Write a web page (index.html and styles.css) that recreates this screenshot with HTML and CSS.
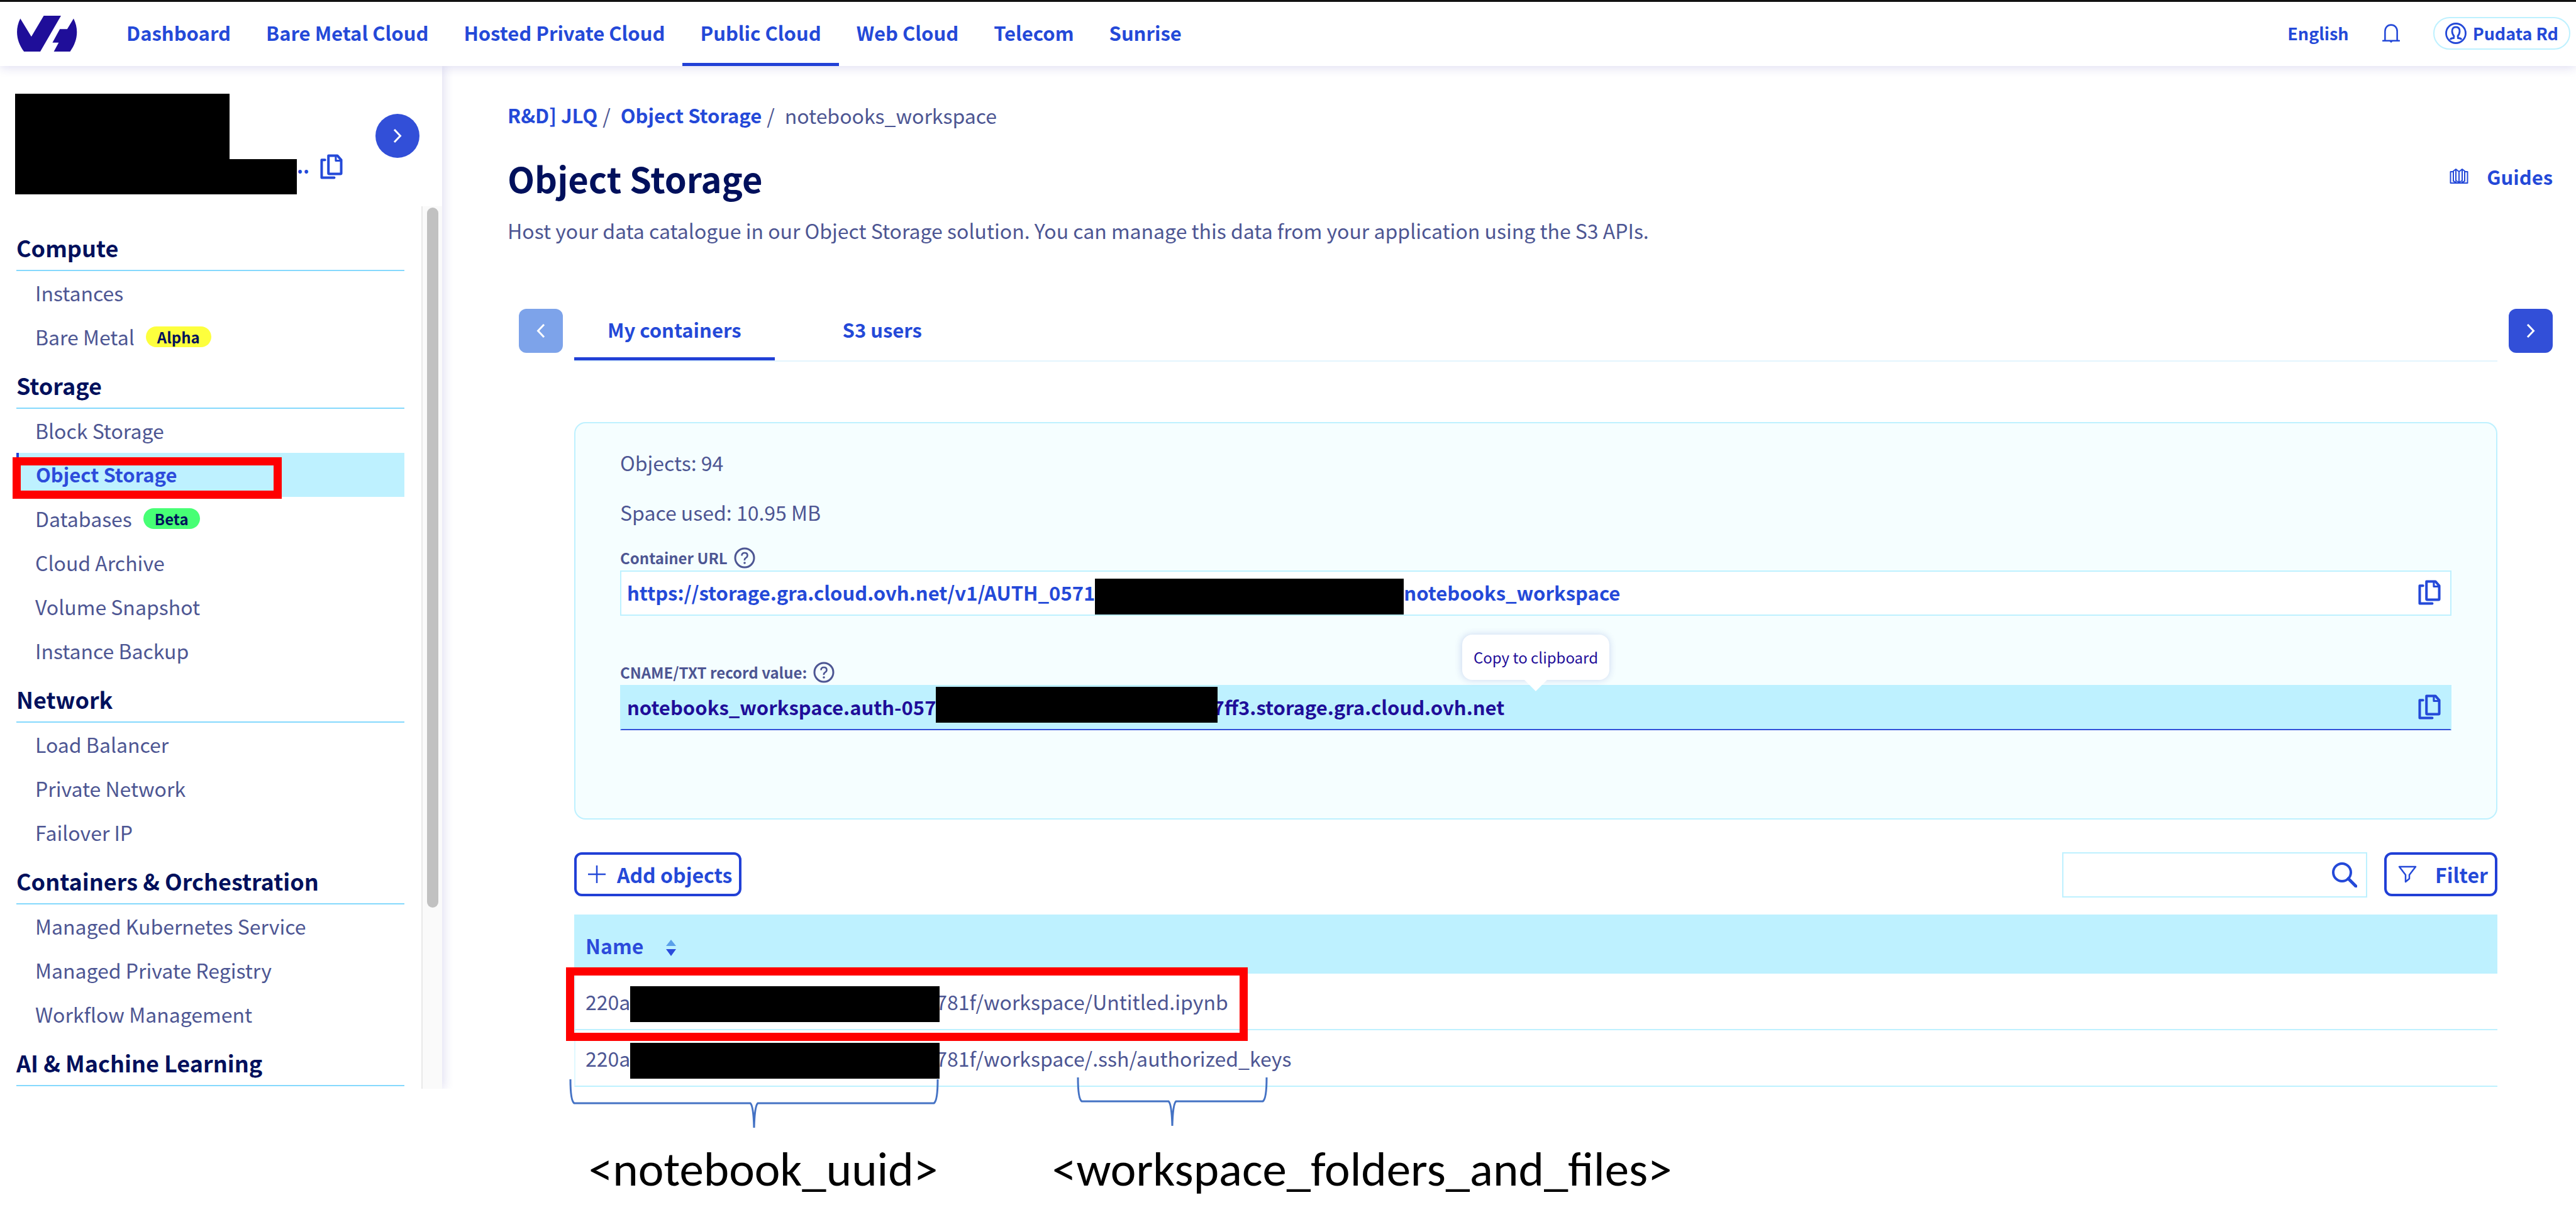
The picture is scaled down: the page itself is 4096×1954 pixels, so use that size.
FILE: index.html
```
<!DOCTYPE html>
<html lang="en">
<head>
<meta charset="utf-8">
<title>Object Storage</title>
<link rel="stylesheet" href="styles.css">
</head>
<body>
<svg class="symbols" aria-hidden="true">
  <symbol id="copy" viewBox="0 0 115 130">
    <g fill="none" stroke="currentColor" stroke-width="13" stroke-linecap="round" stroke-linejoin="round">
      <path d="M24 30H7V122H72"/>
      <path d="M42 8H88L108 30V98Q108 102 104 102H46Q42 102 42 98Z"/>
      <path d="M80 10V34H106" stroke-width="10"/>
    </g>
  </symbol>
  <symbol id="help" viewBox="0 0 34 34">
    <circle cx="17" cy="17" r="15" fill="none" stroke="currentColor" stroke-width="3"/>
    <path d="M12.500 13.500Q12.500 9 17 9T21.500 13Q21.500 15.500 19 17T17 21" fill="none" stroke="currentColor" stroke-width="2.600"/>
    <circle cx="17" cy="25" r="1.800" fill="currentColor"/>
  </symbol>
  <symbol id="chevron" viewBox="0 0 14 24">
    <path d="M2 2L11.500 12L2 22" fill="none" stroke="currentColor" stroke-width="3"/>
  </symbol>
</svg>

<div class="shell">
  <header class="topbar">
    <a class="logo" href="#" aria-label="OVHcloud">
      <svg viewBox="55 50 310 185"><path fill="#1f0e99" d="M73 65L130 158L194 50H283L176 235H92C55 185 43 125 73 65ZM348 65C378 125 366 185 330 235H246L271 189H239L277 119H315Z"/></svg>
    </a>
    <nav class="topnav">
      <a href="#">Dashboard</a>
      <a href="#">Bare Metal Cloud</a>
      <a href="#">Hosted Private Cloud</a>
      <a href="#" class="current">Public Cloud</a>
      <a href="#">Web Cloud</a>
      <a href="#">Telecom</a>
      <a href="#">Sunrise</a>
    </nav>
    <div class="account">
      <button class="plain language">English</button>
      <button class="plain" aria-label="Notifications">
        <svg class="bell" viewBox="0 0 26 28"><path d="M1 25H25M4 24V11C4 5 8 1.500 13 1.500S22 5 22 11V24" fill="none" stroke="currentColor" stroke-width="2.400" stroke-linecap="round"/><path d="M9.500 25H16.500L13 28Z" fill="currentColor"/></svg>
      </button>
      <button class="user">
        <svg viewBox="0 0 34 34" fill="none" stroke="currentColor" stroke-width="2.800"><circle cx="17" cy="17" r="15.500"/><path d="M8 27Q9 24.500 13.500 24.500L14 21.500Q11 18 11 13.500Q11 7 17 7T23 13.500Q23 18 20 21.500L20.500 24.500Q25 24.500 26 27"/></svg>
        <span>Pudata Rd</span>
      </button>
    </div>
  </header>

  <div class="workarea">
    <aside class="sidebar">
      <div class="project">
        <div class="project-id">
          <div class="redacted redacted-name"></div>
          <div class="project-line">
            <div class="redacted redacted-id"></div>
            <button class="plain project-copy" aria-label="Copy project ID"><span>..</span><svg class="copy-icon"><use href="#copy"/></svg></button>
          </div>
        </div>
        <button class="expand" aria-label="Expand"><svg class="chevron"><use href="#chevron"/></svg></button>
      </div>
      <div class="menu-area">
        <nav class="menu">
          <h2>Compute</h2>
          <ul>
            <li><a href="#">Instances</a></li>
            <li><a href="#">Bare Metal <span class="badge alpha">Alpha</span></a></li>
          </ul>
          <h2>Storage</h2>
          <ul>
            <li><a href="#">Block Storage</a></li>
            <li class="active"><a href="#">Object Storage</a><span class="highlight highlight-menu"></span></li>
            <li><a href="#">Databases <span class="badge beta">Beta</span></a></li>
            <li><a href="#">Cloud Archive</a></li>
            <li><a href="#">Volume Snapshot</a></li>
            <li><a href="#">Instance Backup</a></li>
          </ul>
          <h2>Network</h2>
          <ul>
            <li><a href="#">Load Balancer</a></li>
            <li><a href="#">Private Network</a></li>
            <li><a href="#">Failover IP</a></li>
          </ul>
          <h2>Containers &amp; Orchestration</h2>
          <ul>
            <li><a href="#">Managed Kubernetes Service</a></li>
            <li><a href="#">Managed Private Registry</a></li>
            <li><a href="#">Workflow Management</a></li>
          </ul>
          <h2>AI &amp; Machine Learning</h2>
        </nav>
        <div class="scrollbar"><div class="thumb"></div></div>
      </div>
    </aside>

    <main class="content">
      <nav class="breadcrumb" aria-label="Breadcrumb">
        <a href="#">R&amp;D] JLQ</a><span class="slash">/</span>
        <a href="#">Object Storage</a><span class="slash">/</span>
        <span>notebooks_workspace</span>
      </nav>
      <div class="title-row">
        <h1>Object Storage</h1>
        <button class="plain guides">
          <svg viewBox="0 0 30 25" fill="none" stroke="currentColor" stroke-width="2" stroke-linejoin="round"><path d="M6 5H1.500V23H28.500V5H24M15 5V22M15 5L10 1L6 4V20L11 22M15 5L20 1L24 4V20L19 22"/><path d="M10 3V19L15 22L20 19V3"/></svg>
          <span>Guides</span>
        </button>
      </div>
      <p class="lead">Host your data catalogue in our Object Storage solution. You can manage this data from your application using the S3 APIs.</p>

      <div class="tab-row">
        <button class="step" disabled aria-label="Previous"><svg class="chevron flip"><use href="#chevron"/></svg></button>
        <div class="tabs">
          <a href="#" class="current">My containers</a>
          <a href="#">S3 users</a>
        </div>
        <button class="step" aria-label="Next"><svg class="chevron"><use href="#chevron"/></svg></button>
      </div>

      <section class="container-view">
        <div class="panel">
          <p>Objects: 94</p>
          <p>Space used: 10.95 MB</p>
          <div class="field">
            <div class="label">Container URL <svg class="help"><use href="#help"/></svg></div>
            <div class="copybox">
              <a href="#">https://storage.gra.cloud.ovh.net/v1/AUTH_0571<span class="redacted redacted-url"></span>notebooks_workspace</a>
              <button class="plain" aria-label="Copy URL"><svg class="copy-icon"><use href="#copy"/></svg></button>
            </div>
          </div>
          <div class="field">
            <div class="label">CNAME/TXT record value: <svg class="help"><use href="#help"/></svg></div>
            <div class="copybox hover">
              <a href="#">notebooks_workspace.auth-057<span class="redacted redacted-cname"></span>7ff3.storage.gra.cloud.ovh.net</a>
              <button class="plain" aria-label="Copy record value"><svg class="copy-icon"><use href="#copy"/></svg></button>
              <div class="tooltip" role="tooltip">Copy to clipboard</div>
            </div>
          </div>
        </div>

        <div class="toolbar">
          <button class="outlined add"><svg class="plus" viewBox="0 0 28 28"><path d="M14 0V28M0 14H28" stroke="currentColor" stroke-width="2.500"/></svg>Add objects</button>
          <div class="tools">
            <div class="search">
              <input type="search" aria-label="Search">
              <svg viewBox="0 0 40 40" fill="none" stroke="currentColor" stroke-width="4"><circle cx="16" cy="16" r="14"/><path d="M26 26L38 38" stroke-width="5" stroke-linecap="round"/></svg>
            </div>
            <button class="outlined filter"><svg class="funnel" viewBox="0 0 30 29"><path d="M2 2H28L18 15V21L12 26V15Z" fill="none" stroke="currentColor" stroke-width="2.500" stroke-linejoin="round"/></svg>Filter</button>
          </div>
        </div>

        <div class="table-wrap">
          <table>
            <thead>
              <tr><th>Name<svg class="sort" viewBox="0 0 16 26"><path d="M0 10L8 0L16 10Z" fill="#5aa0ea"/><path d="M0 15H16L8 26Z" fill="#2a4bdc"/></svg></th></tr>
            </thead>
            <tbody>
              <tr><td>220a<span class="redacted redacted-uuid"></span>781f/workspace/Untitled.ipynb</td></tr>
              <tr><td>220a<span class="redacted redacted-uuid"></span>781f/workspace/.ssh/authorized_keys</td></tr>
            </tbody>
          </table>
          <span class="highlight highlight-row"></span>
        </div>
      </section>
    </main>
  </div>
</div>

<div class="notes">
  <div class="note note-uuid">
    <svg class="brace" viewBox="0 0 586 77" preserveAspectRatio="none"><path d="M1 0Q1 34 7 38H287Q292 42 293 77Q294 42 299 38H579Q585 34 585 0"/></svg>
    <span>&lt;notebook_uuid&gt;</span>
  </div>
  <div class="note note-files">
    <svg class="brace" viewBox="0 0 302 77" preserveAspectRatio="none"><path d="M1 0Q1 34 7 38H145Q150 42 151 77Q152 42 157 38H295Q301 34 301 0"/></svg>
    <span>&lt;workspace_folders_and_files&gt;</span>
  </div>
</div>
</body>
</html>
```
FILE: styles.css
```
* { box-sizing: border-box; }

body {
  margin: 0;
  background: #fff;
  color: #4d5693;
  font-family: "Noto Sans CJK SC", "Noto Sans", sans-serif;
  font-size: 32px;
  line-height: 48px;
}

h1, h2, p, ul { margin: 0; padding: 0; }
ul { list-style: none; }
a { color: inherit; text-decoration: none; }
svg { display: block; flex: none; }
button { font: inherit; color: inherit; cursor: pointer; }

.symbols { position: absolute; width: 0; height: 0; }

.plain {
  padding: 0;
  border: 0;
  background: none;
  color: #2449d8;
}

.redacted { background: #000; }

.highlight {
  position: absolute;
  border: 13px solid #f00;
  pointer-events: none;
}

.copy-icon { width: 36px; height: 40px; }
.chevron { width: 14px; height: 24px; }
.flip { transform: rotate(180deg); }

.shell { overflow: hidden; }

/* Top bar */

.topbar {
  position: relative;
  z-index: 2;
  display: flex;
  align-items: flex-start;
  border-top: 3px solid #111;
  background: #fff;
  color: #2449d8;
  font-size: 31px;
  font-weight: 700;
  box-shadow: 0 2px 16px rgba(40, 30, 160, 0.16);
}

.logo { padding: 22px 50px 0 26px; }
.logo svg { width: 97px; height: 57px; }

.topnav { display: flex; }
.topnav a {
  padding: 25px 28px 24px;
  border-bottom: 5px solid transparent;
}
.topnav .current { border-color: #2140d6; }

.account {
  display: flex;
  align-items: center;
  gap: 53px;
  margin-left: auto;
  padding: 24px 9px 0 0;
  font-size: 27px;
}
.account .plain { font-weight: 700; }
.bell { width: 28px; height: 30px; }
.user {
  display: flex;
  align-items: center;
  gap: 10px;
  height: 52px;
  padding: 0 17px;
  border: 2px solid #bef1ff;
  border-radius: 26px;
  background: #fff;
  font-weight: 700;
}
.user svg { width: 34px; height: 34px; }

/* Sidebar */

.workarea { display: flex; }

.sidebar {
  display: flex;
  flex-direction: column;
  flex: none;
  width: 703px;
  box-shadow: 2px 0 16px rgba(40, 30, 160, 0.16);
}

.project {
  display: flex;
  align-items: flex-start;
  justify-content: space-between;
  padding: 44px 36px 19px 24px;
}
.redacted-name { width: 341px; height: 104px; }
.redacted-id { width: 448px; height: 56px; }
.project-line { display: flex; align-items: flex-start; }
.project-copy {
  display: flex;
  gap: 17px;
  height: 40px;
  margin-top: -8px;
  font-size: 31px;
  font-weight: 700;
  line-height: 36px;
}

.expand {
  display: grid;
  place-items: center;
  width: 70px;
  height: 70px;
  margin-top: 32px;
  padding: 0;
  border: 0;
  border-radius: 50%;
  background: #324fd8;
  color: #fff;
}

.menu-area {
  display: flex;
  justify-content: space-between;
  flex: 1;
}
.menu { width: 643px; padding: 24px 0 4px 26px; }
.menu h2 {
  padding: 17px 0 12px;
  border-bottom: 2px solid #85d9fd;
  color: #00105c;
  font-size: 36px;
  font-weight: 700;
  line-height: 48px;
}
.menu li { position: relative; }
.menu li a {
  display: flex;
  align-items: center;
  gap: 18px;
  height: 70px;
  padding: 0 0 2px 30px;
}
.menu .active { background: #bef1ff; color: #2c4bdb; font-size: 31px; font-weight: 700; }
.menu .active a { padding-left: 27px; border-left: 4px solid #2140d6; }
.highlight-menu { left: -6px; top: 7px; width: 428px; height: 66px; }

.badge {
  padding: 0 18px;
  border-radius: 17px;
  color: #00105c;
  font-size: 24px;
  font-weight: 700;
  line-height: 33px;
}
.alpha { background: #fdff3d; }
.beta { background: #47ff75; }

.scrollbar {
  width: 33px;
  padding: 2px 7px;
  border-left: 2px solid #e8e8e8;
  background: #fafafa;
}
.thumb { width: 18px; height: 1113px; border-radius: 9px; background: #c1c1c1; }

/* Content */

.content { flex: 1; padding: 54px 37px 0 104px; }

.breadcrumb { display: flex; }
.breadcrumb a { color: #2449d8; font-size: 31px; font-weight: 700; }
.slash { margin: 0 16px 0 8px; }

.title-row {
  display: flex;
  align-items: center;
  justify-content: space-between;
  margin-top: 36px;
}
h1 { color: #00105c; font-size: 56px; font-weight: 700; line-height: 80px; }
.guides {
  display: flex;
  align-items: center;
  gap: 29px;
  padding-bottom: 5px;
  font-size: 31px;
  font-weight: 700;
}
.guides svg { width: 30px; height: 25px; }

.lead { margin-top: 19px; }

.tab-row {
  display: flex;
  align-items: flex-start;
  gap: 18px;
  margin-top: 101px;
  padding-left: 18px;
}
.step {
  display: grid;
  place-items: center;
  flex: none;
  width: 70px;
  height: 70px;
  padding: 0;
  border: 0;
  border-radius: 12px;
  background: #324fd8;
  color: #fff;
}
.step:disabled { background: #7da3ea; }

.tabs {
  display: flex;
  flex: 1;
  gap: 55px;
  border-bottom: 2px solid #e3f5fd;
  color: #2449d8;
  font-size: 31px;
  font-weight: 700;
}
.tabs a { padding: 9px 53px 20px; border-bottom: 5px solid transparent; }
.tabs .current { border-color: #2140d6; }

.container-view { margin: 96px 88px 0 106px; }

.panel {
  padding: 38px 71px 140px;
  border: 2px solid #bef1ff;
  border-radius: 18px;
  background: #f5feff;
}
.panel p + p { margin-top: 31px; }
.field { margin-top: 32px; }
.field + .field { margin-top: 73px; }
.label {
  display: flex;
  align-items: center;
  gap: 10px;
  height: 34px;
  font-size: 24px;
  font-weight: 700;
}
.help { width: 34px; height: 34px; }

.copybox {
  position: relative;
  display: flex;
  align-items: center;
  justify-content: space-between;
  height: 72px;
  margin-top: 3px;
  padding: 0 15px 2px 9px;
  border: 2px solid #bef1ff;
  background: #fff;
  color: #2449d8;
  font-size: 31px;
  font-weight: 700;
}
.copybox a { display: flex; align-items: center; }
.copybox.hover {
  border-bottom-color: #324fd8;
  background: #bef1ff;
  color: #1f0e99;
}
.redacted-url { width: 491px; height: 57px; margin-top: 12px; }
.redacted-cname {
  z-index: 1;
  width: 448px;
  height: 57px;
  margin: 0 -8px 8px 0;
}

.tooltip {
  position: absolute;
  left: 50%;
  bottom: 78px;
  padding: 12px 18px;
  border-radius: 16px;
  transform: translateX(-50%);
  background: #fff;
  color: #1f0e99;
  font-size: 24px;
  font-weight: 400;
  box-shadow: 0 0 12px rgba(40, 60, 180, 0.2);
}
.tooltip::after {
  content: "";
  position: absolute;
  left: 50%;
  top: 100%;
  margin-left: -18px;
  border: 18px solid transparent;
  border-top-color: #fff;
  border-bottom: 0;
}

.toolbar {
  display: flex;
  align-items: flex-start;
  justify-content: space-between;
  margin-top: 52px;
}
.outlined {
  display: flex;
  align-items: center;
  height: 70px;
  padding: 0 11px 0 18px;
  border: 4px solid #2140d6;
  border-radius: 12px;
  background: #fff;
  color: #2449d8;
  font-weight: 700;
}
.add { gap: 18px; }
.plus { width: 28px; height: 28px; }
.filter { gap: 29px; }
.funnel { width: 30px; height: 29px; }

.tools { display: flex; gap: 27px; }
.search {
  display: flex;
  align-items: center;
  width: 485px;
  height: 72px;
  padding-right: 14px;
  border: 2px solid #bef1ff;
  background: #fff;
  color: #2449d8;
}
.search input {
  flex: 1;
  min-width: 0;
  height: 100%;
  padding: 0 16px;
  border: 0;
  outline: 0;
  background: none;
  font: inherit;
}
.search svg { width: 40px; height: 40px; }

.table-wrap { position: relative; margin-top: 27px; }
table { width: 100%; border-collapse: separate; border-spacing: 0; }
th {
  padding: 25px 18px 21px;
  background: #bef1ff;
  color: #2c4bdb;
  font-weight: 700;
  text-align: left;
}
.sort { display: inline-block; width: 16px; height: 26px; margin-left: 36px; vertical-align: -3px; }
td {
  height: 90px;
  padding: 9px 16px 0;
  border-bottom: 2px solid #bef1ff;
  border-left: 2px solid #dff8ff;
}
.redacted-uuid {
  position: relative;
  z-index: 1;
  display: inline-block;
  width: 492px;
  height: 57px;
  margin-right: -6px;
  vertical-align: middle;
}
.highlight-row { left: -13px; top: 84px; width: 1084px; height: 117px; }

/* Callouts under the listing */

.notes {
  display: flex;
  gap: 182px;
  padding: 80px 0 0 936px;
  color: #000;
  font-family: Carlito, Calibri, Lato, sans-serif;
  font-size: 77px;
  line-height: 96px;
}
.note { position: relative; }
.brace {
  position: absolute;
  height: 77px;
  overflow: visible;
  fill: none;
  stroke: #4472c4;
  stroke-width: 3;
}
.note-uuid .brace { left: -30px; top: -95px; width: 586px; }
.note-files .brace { left: 40px; top: -98px; width: 302px; }
```
